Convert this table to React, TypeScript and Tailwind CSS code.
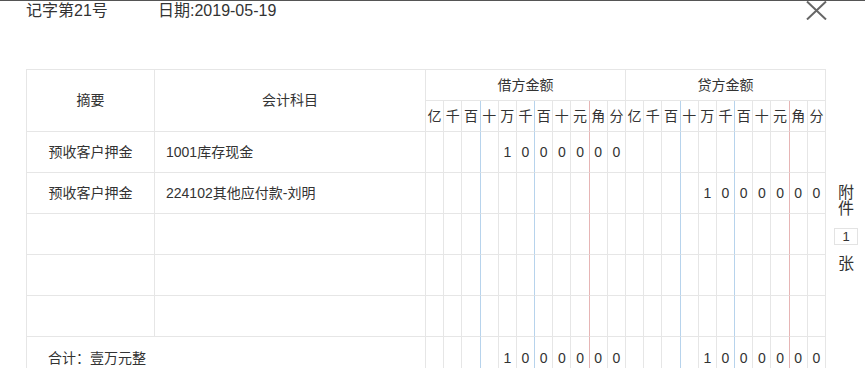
const units = ["亿", "千", "百", "十", "万", "千", "百", "十", "元", "角", "分"];

const debit1 = ["", "", "", "", "1", "0", "0", "0", "0", "0", "0"];
const blank = ["", "", "", "", "", "", "", "", "", "", ""];

type Row = { summary: string; account: string; debit: string[]; credit: string[] };

const rows: Row[] = [
  { summary: "预收客户押金", account: "1001库存现金", debit: debit1, credit: blank },
  { summary: "预收客户押金", account: "224102其他应付款-刘明", debit: blank, credit: debit1 },
  { summary: "", account: "", debit: blank, credit: blank },
  { summary: "", account: "", debit: blank, credit: blank },
  { summary: "", account: "", debit: blank, credit: blank },
];

// right border colour of a digit cell, by its place in the 11 columns
function lineClass(i: number) {
  if (i === 2 || i === 5) return "border-r-[#b7d3ec]";
  if (i === 8) return "border-r-[#e6b5b5]";
  return "border-r-[#e6e6e6]";
}

function DigitCells({ values, h }: { values: string[]; h: string }) {
  return (
    <>
      {values.map((v, i) => (
        <div
          key={i}
          className={`${h} flex items-center justify-center border-r border-b border-b-[#e6e6e6] ${lineClass(i)}`}
        >
          {v}
        </div>
      ))}
    </>
  );
}

export default function App() {
  return (
    <div
      className="w-[865px] h-[368px] overflow-hidden bg-white text-[#333]"
      style={{ fontFamily: '"Liberation Sans", "Noto Sans CJK SC", sans-serif' }}
    >
      {/* Title bar */}
      <div className="flex items-start border-t border-[#555] h-[69px]">
        <div className="ml-[26px] w-[132px] text-[16px] leading-[20px]">记字第21号</div>
        <div className="text-[16px] leading-[20px]">日期:2019-05-19</div>
        <svg className="ml-auto mr-[38px] mt-0" width="21" height="19" viewBox="0 0 21 19">
          <path d="M1 0.5L20 18.5M20 0.5L1 18.5" stroke="#666" strokeWidth="2" fill="none" />
        </svg>
      </div>

      <div className="flex items-start">
        {/* Voucher table */}
        <div className="ml-[26px] w-[800px] grid grid-cols-[128px_271px_repeat(22,minmax(0,1fr))] border-l border-t border-[#e6e6e6] text-[14px]">
          <div className="row-span-2 flex items-center justify-center border-r border-b border-[#e6e6e6]">摘要</div>
          <div className="row-span-2 flex items-center justify-center border-r border-b border-[#e6e6e6]">会计科目</div>
          <div className="col-span-11 h-[31px] flex items-center justify-center border-r border-b border-[#e6e6e6]">借方金额</div>
          <div className="col-span-11 h-[31px] flex items-center justify-center border-r border-b border-[#e6e6e6]">贷方金额</div>
          <DigitCells values={units} h="h-[31px]" />
          <DigitCells values={units} h="h-[31px]" />

          {rows.map((r, idx) => (
            <div key={idx} className="contents">
              <div className="h-[41px] flex items-center justify-center border-r border-b border-[#e6e6e6]">{r.summary}</div>
              <div className="h-[41px] flex items-center pl-[11px] border-r border-b border-[#e6e6e6]">{r.account}</div>
              <DigitCells values={r.debit} h="h-[41px]" />
              <DigitCells values={r.credit} h="h-[41px]" />
            </div>
          ))}

          <div className="col-span-2 h-[44px] flex items-center pl-[21px] border-r border-b border-[#e6e6e6]">合计：壹万元整</div>
          <DigitCells values={debit1} h="h-[44px]" />
          <DigitCells values={debit1} h="h-[44px]" />
        </div>

        {/* Attachment count */}
        <div className="ml-[8px] w-[24px] pt-[116px] flex flex-col items-center text-[16px] leading-[16px]">
          <span>附</span>
          <span>件</span>
          <div className="mt-[11px] w-[24px] h-[17px] border border-[#e3e3e3] flex items-center justify-center text-[13px] leading-[15px]">1</div>
          <span className="mt-[11px]">张</span>
        </div>
      </div>
    </div>
  );
}
